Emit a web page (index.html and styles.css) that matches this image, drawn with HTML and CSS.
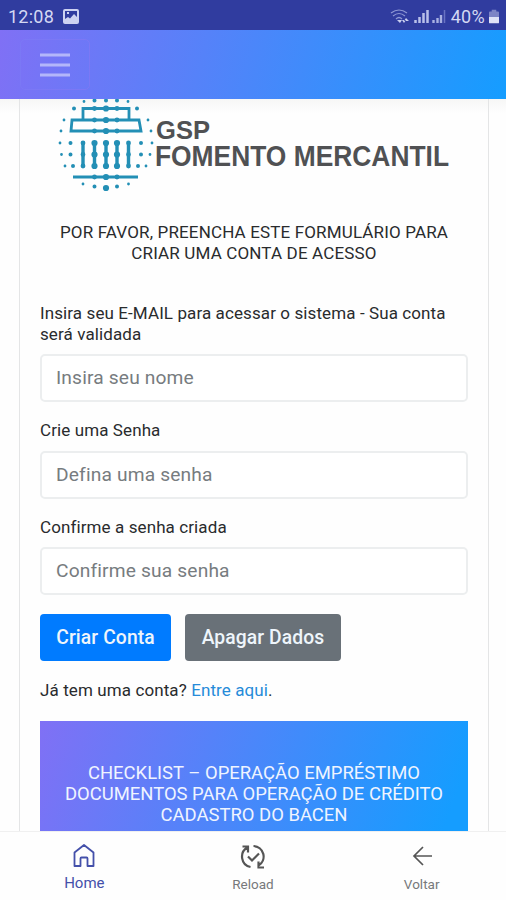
FILE: index.html
```html
<!DOCTYPE html>
<html lang="pt-BR">
<head>
<meta charset="utf-8">
<title>GSP Fomento Mercantil</title>
<link rel="stylesheet" href="styles.css">
</head>
<body>
<div class="app">
  <div class="status">
    <span class="status-text">12:08</span>
    <svg class="photo" width="16" height="15" viewBox="0 0 16 15"><path fill="#cdd2f1" fill-rule="evenodd" d="M2 0h12q2 0 2 2v11q0 2-2 2H2q-2 0-2-2V2Q0 0 2 0zM2 2v8l3-2 2 1.500 4-4.500 3 3V2zM4 3h2v2H4z"/></svg>
    <svg class="signals" width="56" height="17" viewBox="0 0 56 17" fill="none" stroke="#8f98d4">
      <path d="M1 5Q9-1 17 5M3 8q6-5 12 0M6 11q3-3 6 0" stroke-width="1.2"/><path d="M7 12l3 3 2-3zM12 12l2 3 2-3zM14 13l2-3 3 3z" fill="#c9ceef" stroke="none"/>
      <path d="M25.500 12v3M29.500 9v6M33.500 5v10M37.500 2v13" stroke="#b9c0ea" stroke-width="2.500"/>
      <path d="M43.500 12v3M47.500 10v5M51 7v8" stroke="#a9b1e2" stroke-width="2.400"/><path d="M54.500 2v13" stroke="#6872c2" stroke-width="1.500"/>
    </svg>
    <span class="status-text battery-text">40%</span>
    <svg width="10" height="15" viewBox="0 0 11 15"><path d="M3 0h5v2h2q1 0 1 1v5H0V3q0-1 1-1h2z" fill="#7d84c6"/><path d="M0 8h11v6q0 1-1 1H1q-1 0-1-1z" fill="#dfe2f7"/></svg>
  </div>
  <header class="navbar">
    <button class="toggler" aria-label="Menu"><svg width="30" height="24" viewBox="0 0 30 24"><path d="M0 2h30M0 12h30M0 22h30" stroke="#b3b6fa" stroke-width="2.800"/></svg></button>
  </header>
  <main class="content">
    <section class="card">
      <div class="logo">
        <svg width="103" height="94" viewBox="0 0 103 94" fill="none" stroke="#238fb5">
          <path d="M26 21V9.500h46V21M15 21h67l2 11H14zM16 78h65" stroke-width="2.800"/>
          <path d="M26 44v23M37.500 44v23M49 44v23M60 44v23M71.500 44v23" stroke-width="3.400"/>
          <g stroke-linecap="round">
            <path d="M37.500 9.500h0M60 9.500h0M37.500 21h0M60 21h0M37.500 32h0M60 32h0M37.500 78h0M60 78h0M26 44h0M26 55.500h0M26 67h0M71.500 44h0M71.500 55.500h0M71.500 67h0" stroke-width="4.800"/>
            <path d="M49 9.500h0M49 21h0M49 32h0M49 78h0M37.500 44h0M37.500 55.500h0M37.500 67h0M60 44h0M60 55.500h0M60 67h0M49 44h0M49 55.500h0M49 67h0M49 89h0" stroke-width="6.200"/>
            <path d="M37.500 1.500h0M49 1.500h0M60 1.500h0M17 9.500h0M80 9.500h0M13.500 44h0M13.500 55.500h0M16 67h0M84 44h0M84 55.500h0M81 67h0M37.500 87.500h0M60 87.500h0" stroke-width="4"/>
            <path d="M27 2.500h0M71 2.500h0M7 21h0M91 21h0M4 32h0M94 32h0M3 44h0M95 44h0M4.500 55.500h0M93 55.500h0M8 67h0M89 67h0M26 85h0M71.500 85h0" stroke-width="2.800"/>
          </g>
        </svg>
        <svg class="brand" width="304" height="62" viewBox="0 0 304 62"><text x="4" y="22.500" textLength="54" lengthAdjust="spacingAndGlyphs">GSP</text><text class="brand-name" x="3" y="50" textLength="294" lengthAdjust="spacingAndGlyphs">FOMENTO MERCANTIL</text></svg>
      </div>
      <p class="intro"><span>POR FAVOR, PREENCHA ESTE FORMULÁRIO PARA</span><br><span>CRIAR UMA CONTA DE ACESSO</span></p>
      <form>
        <label for="email"><span>Insira seu E-MAIL para acessar o sistema - Sua conta</span><br><span>será validada</span></label>
        <input id="email" placeholder="Insira seu nome">
        <label for="senha">Crie uma Senha</label>
        <input id="senha" placeholder="Defina uma senha">
        <label for="confirma">Confirme a senha criada</label>
        <input id="confirma" placeholder="Confirme sua senha">
        <div class="actions"><button type="button" class="btn create">Criar Conta</button><button type="button" class="btn clear">Apagar Dados</button></div>
        <p class="login">Já tem uma conta? <a href="#">Entre aqui</a>.</p>
      </form>
      <div class="checklist">CHECKLIST – OPERAÇÃO EMPRÉSTIMO<br>DOCUMENTOS PARA OPERAÇÃO DE CRÉDITO<br>CADASTRO DO BACEN</div>
    </section>
  </main>
  <nav class="tabs">
    <div class="tab active"><svg width="24" height="24" viewBox="0 0 24 24" fill="none" stroke="currentColor" stroke-width="1.800"><path d="M2.500 22V8.500L12 1l9.500 7.500V22H15.500v-7.500q0-1-1-1h-5q-1 0-1 1V22z" stroke-linejoin="round"/></svg><span>Home</span></div>
    <div class="tab"><svg width="28" height="26" viewBox="0 0 28 26" fill="none" stroke="currentColor" stroke-width="2.200"><path d="M8.500 3.500A10.500 10.500 0 0 0 11.500 23M3.500 2.500h5.500v6M14.500 2a10.500 10.500 0 0 1 5 19.500M25 23.500h-5.500v-6M9 12.500l4 4 7-7"/></svg><span>Reload</span></div>
    <div class="tab"><svg width="24" height="24" viewBox="0 0 24 24" fill="none" stroke="currentColor" stroke-width="1.700"><path d="M22 12H4M13 3l-9 9 9 9"/></svg><span>Voltar</span></div>
  </nav>
</div>
</body>
</html>
```
FILE: styles.css
```css
* { box-sizing: border-box; }
body { margin: 0; font-family: Roboto, sans-serif; color: #292b2d; background: #fff; }
.app { width: 506px; height: 900px; display: flex; flex-direction: column; overflow: hidden; }
.status { height: 30px; flex: none; background: #303c9f; display: flex; align-items: center; padding: 2px 7px 0 8px; }
.status-text { color: #d4d8f3; font-size: 18px; letter-spacing: .25px; }
.photo { margin-left: 9px; }
.signals { margin-left: auto; margin-right: 5px; }
.battery-text { margin-right: 4px; letter-spacing: .3px; }
.navbar { height: 69px; flex: none; background: linear-gradient(105deg, #8070f5 0%, #159dff 100%); padding: 9px 20px; }
.toggler { width: 70px; height: 51px; padding: 0; background: transparent; border: 1px solid #7b78f5; border-radius: 5px; display: flex; align-items: center; justify-content: center; }
.content { flex: 1; min-height: 0; overflow: hidden; padding: 0 17px 0 19px; background: linear-gradient(#f7f7f6, #fefefe 14px); }
.card { height: 100%; border: solid #e4e5e6; border-width: 0 1px; padding: 0 20px; }
.logo { height: 95px; display: flex; margin-left: 17px; }
.logo svg { flex: none; }
.brand { margin: 17px 0 0 -8px; }
.brand text { font: bold 25px "Liberation Sans", sans-serif; fill: #505153; }
.brand .brand-name { font-size: 29px; }
.intro { margin: 28px 0 40px; text-align: center; font-size: 17px; line-height: 20.500px; letter-spacing: .15px; white-space: nowrap; }
form { display: flex; flex-direction: column; }
label, .login { font-size: 17px; line-height: 20.500px; letter-spacing: .1px; white-space: nowrap; }
label { margin-bottom: 10px; }
input { width: 100%; height: 48px; border: 2px solid #eceeef; border-radius: 5px; padding: 0 14px 1px; background: #fff; font: 19.200px Roboto, sans-serif; margin-bottom: 18px; letter-spacing: .15px; }
input::placeholder { color: #777c80; opacity: 1; }
.actions { display: flex; gap: 14px; margin-top: 1px; }
.btn { height: 47px; border: 0; border-radius: 4px; padding: 0 0 1px; color: #eef5fb; font: 500 19.300px Roboto, sans-serif; letter-spacing: .1px; }
.create { width: 131px; background: #007bff; }
.clear { width: 156px; background: #697178; }
.login { margin: 19px 0 20px; }
.login a { color: #268bd9; text-decoration: none; }
.checklist { height: 150px; padding-top: 42px; background: linear-gradient(110deg, #8070f5, #159dff 92%); text-align: center; color: #eff4ff; font-size: 18.450px; line-height: 21px; }
.tabs { height: 69px; flex: none; border-top: 1px solid #f0f0f0; background: #fefefe; display: grid; grid-template-columns: repeat(3, 1fr); }
.tab { height: 60px; display: flex; flex-direction: column; align-items: center; justify-content: space-between; padding-top: 12px; color: #77797b; font-size: 13.500px; }
.tab svg { color: #555; }
.tab.active, .tab.active svg { color: #4450aa; }
.tab.active { font-size: 15px; }
```
